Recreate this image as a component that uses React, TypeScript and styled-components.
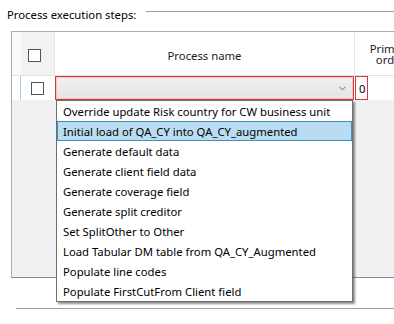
import styled, { createGlobalStyle } from "styled-components";

const GlobalStyle = createGlobalStyle`
  body {
    margin: 0;
    background: #fff;
    font-family: "Noto Sans", "Liberation Sans", Arial, sans-serif;
    font-size: 11.3px;
    color: #000;
  }
`;

const Page = styled.div`
  width: 394px;
  height: 324px;
  overflow: hidden;
  background: #fff;
`;
const TitleRow = styled.div`
  display: flex;
  height: 15px;
  padding: 8px 0 0 7px;
`;
const Title = styled.div`
  line-height: 14px;
  white-space: nowrap;
`;
const TitleLine = styled.div`
  flex: 1;
  height: 1px;
  margin: 3px 0 0 10px;
  background: #a0a0a0;
`;
const Grid = styled.div`
  margin: 8px 0 0 11px;
  width: 440px;
  height: 247px;
  box-sizing: border-box;
  border: 1px solid #adadad;
  border-bottom-color: #7590ab;
  display: flex;
  flex-direction: column;
`;
const Row = styled.div<{ $h: number }>`
  display: flex;
  height: ${(p) => p.$h}px;
  flex-shrink: 0;
`;
const HeaderRow = styled(Row)`
  border-bottom: 1px solid #e2e2e2;
`;
const Cell = styled.div<{ $w: number; $bg?: string; $line?: string }>`
  width: ${(p) => p.$w}px;
  flex-shrink: 0;
  box-sizing: border-box;
  background: ${(p) => p.$bg || "#fff"};
  border-right: 1px solid ${(p) => p.$line || "transparent"};
  display: flex;
  align-items: center;
  position: relative;
`;
const HeaderText = styled.div<{ $pt?: number }>`
  width: 100%;
  text-align: center;
  line-height: 11px;
  padding-top: ${(p) => p.$pt ?? 4}px;
  color: #1a1a1a;
`;
const Check = styled.div<{ $ml: number; $mt?: number }>`
  width: 13px;
  height: 13px;
  box-sizing: border-box;
  border: 1px solid #555;
  background: #fff;
  margin-left: ${(p) => p.$ml}px;
  margin-top: ${(p) => p.$mt || 0}px;
`;
const Combo = styled.div`
  width: 100%;
  height: 100%;
  box-sizing: border-box;
  border: 1px solid #d43c3c;
  box-shadow: inset 0 0 0 1px #f2c4c4;
  background: linear-gradient(#f0f0f0, #e4e4e4);
  display: flex;
  align-items: center;
  justify-content: flex-end;
  padding-right: 7px;
`;
const ValueBox = styled.div`
  width: 13px;
  height: 100%;
  box-sizing: border-box;
  border: 1px solid #d43c3c;
  padding-left: 3px;
  display: flex;
  align-items: center;
`;
const Filler = styled.div`
  flex: 1;
  background: #f0f0f0;
`;
const Popup = styled.div`
  position: absolute;
  left: 1px;
  top: 100%;
  width: 297px;
  box-sizing: border-box;
  border: 1px solid #6e6e6e;
  background: #fff;
  box-shadow: 2px 2px 2px rgba(0, 0, 0, 0.45);
  z-index: 2;
`;
const Item = styled.div<{ $active?: boolean }>`
  height: 20px;
  box-sizing: border-box;
  padding-left: 5px;
  display: flex;
  align-items: center;
  white-space: nowrap;
  background: ${(p) => (p.$active ? "#b9dcf1" : "transparent")};
  border: 1px solid ${(p) => (p.$active ? "#3f8fc4" : "transparent")};
`;
const BottomLine = styled.div`
  margin: 30px 0 0 16px;
  height: 1px;
  background: #a0a0a0;
`;

const steps = [
  "Override update Risk country for CW business unit",
  "Initial load of QA_CY into QA_CY_augmented",
  "Generate default data",
  "Generate client field data",
  "Generate coverage field",
  "Generate split creditor",
  "Set SplitOther to Other",
  "Load Tabular DM table from QA_CY_Augmented",
  "Populate line codes",
  "Populate FirstCutFrom Client field",
];

const Chevron = () => (
  <svg width="7" height="5" viewBox="0 0 7 5">
    <path d="M0.5 0.8 L3.5 3.8 L6.5 0.8" fill="none" stroke="#666" strokeWidth="1" />
  </svg>
);

export default function App() {
  return (
    <Page>
      <GlobalStyle />
      <TitleRow>
        <Title>Process execution steps:</Title>
        <TitleLine />
      </TitleRow>
      <Grid>
        <HeaderRow $h={43}>
          <Cell $w={9} $bg="#fafafa" />
          <Cell $w={34} $bg="#f2f2f2" $line="#e2e2e2">
            <Check $ml={7} $mt={4} />
          </Cell>
          <Cell $w={300} $line="#e2e2e2">
            <HeaderText>Process name</HeaderText>
          </Cell>
          <Cell $w={72}>
            <HeaderText $pt={0}>
              Primary
              <br />
              order
            </HeaderText>
          </Cell>
        </HeaderRow>
        <Row $h={24}>
          <Cell $w={9} $line="#a9cde9" />
          <Cell $w={34}>
            <Check $ml={10} />
          </Cell>
          <Cell $w={300}>
            <Combo>
              <Chevron />
            </Combo>
            <Popup>
              {steps.map((s, i) => (
                <Item key={s} $active={i === 1}>
                  {s}
                </Item>
              ))}
            </Popup>
          </Cell>
          <Cell $w={72}>
            <ValueBox>0</ValueBox>
          </Cell>
        </Row>
        <Filler />
      </Grid>
      <BottomLine />
    </Page>
  );
}
